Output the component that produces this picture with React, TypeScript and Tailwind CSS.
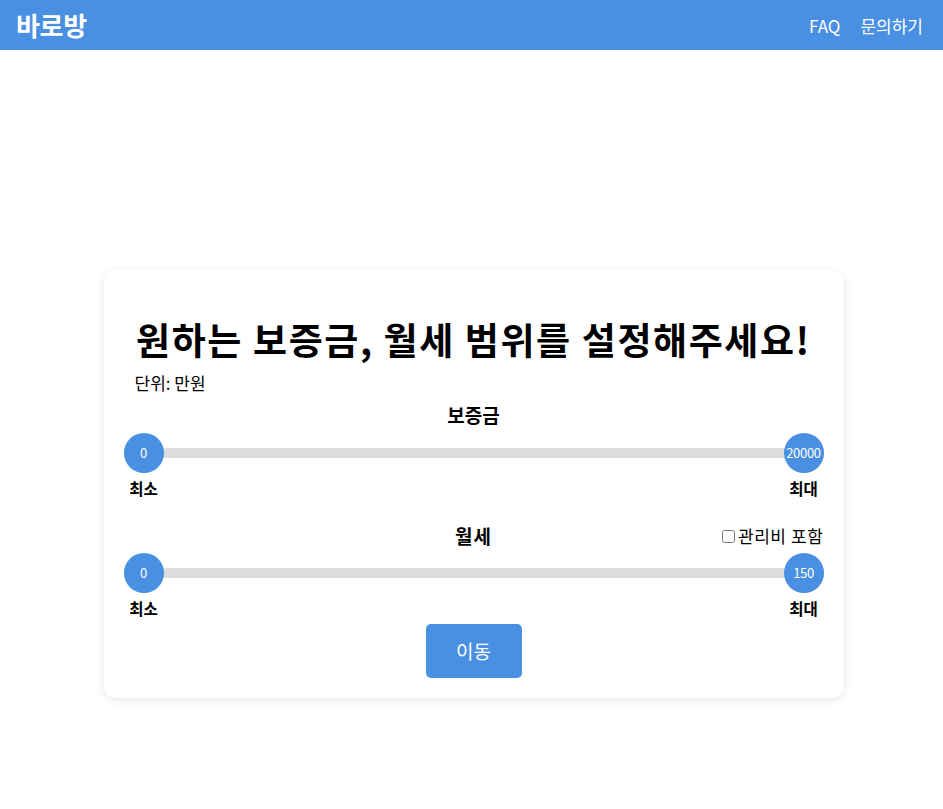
import React from "react";

const FONT = { fontFamily: '"Noto Sans CJK KR", "Noto Sans", sans-serif' };

function Slider({ min, max }: { min: string; max: string }) {
  return (
    <div>
      <div className="relative h-10 flex items-center">
        <div className="h-[10px] w-full bg-[#dddddd]" />
        <div className="absolute left-0 top-0 h-10 w-10 rounded-full bg-[#4a90e2] text-white text-[13px] flex items-center justify-center">
          {min}
        </div>
        <div className="absolute right-0 top-0 h-10 w-10 rounded-full bg-[#4a90e2] text-white text-[13px] flex items-center justify-center tracking-[-0.3px]">
          {max}
        </div>
      </div>
      <div className="flex justify-between mt-[5px] text-[15.5px] font-bold leading-5 text-black">
        <div className="w-10 text-center">최소</div>
        <div className="w-10 text-center">최대</div>
      </div>
    </div>
  );
}

export default function App() {
  return (
    <div className="min-h-screen bg-white" style={FONT}>
      <header className="h-[50px] bg-[#4a90e2] flex items-center justify-between pl-4 pr-5 text-white">
        <div className="text-[26px] font-bold leading-none tracking-[-0.3px]">바로방</div>
        <nav className="flex gap-5 text-[17px] leading-none">
          <span>FAQ</span>
          <span>문의하기</span>
        </nav>
      </header>
      <main className="flex justify-center pl-1 pt-[220px] pb-10">
        <div className="w-[740px] bg-white rounded-xl shadow-[0_2px_10px_rgba(0,0,0,0.1)] p-5">
          <h1 className="pt-[29px] text-center text-[37px] font-bold leading-[40px] text-black tracking-[1.6px]">
            원하는 보증금, 월세 범위를 설정해주세요!
          </h1>
          <div className="mt-3 pl-[11px] text-[17px] leading-6 text-black">단위: 만원</div>
          <div className="mt-2 text-center text-[19px] font-bold leading-6 text-black">보증금</div>
          <div className="mt-[6px]">
            <Slider min="0" max="20000" />
          </div>
          <div className="mt-[26px] grid grid-cols-[1fr_auto_1fr] items-center leading-6">
            <div />
            <div className="text-[19px] font-bold text-black tracking-[1px]">월세</div>
            <label className="justify-self-end flex items-center text-[17px] tracking-[0.6px] text-black">
              <input type="checkbox" className="w-[13px] h-[13px] m-0 mr-[3px]" />
              관리비 포함
            </label>
          </div>
          <div className="mt-[5px]">
            <Slider min="0" max="150" />
          </div>
          <div className="flex justify-center mt-[6px]">
            <button className="w-[96px] h-[54px] rounded-[5px] bg-[#4a90e2] text-white text-[19px]">
              이동
            </button>
          </div>
        </div>
      </main>
    </div>
  );
}
